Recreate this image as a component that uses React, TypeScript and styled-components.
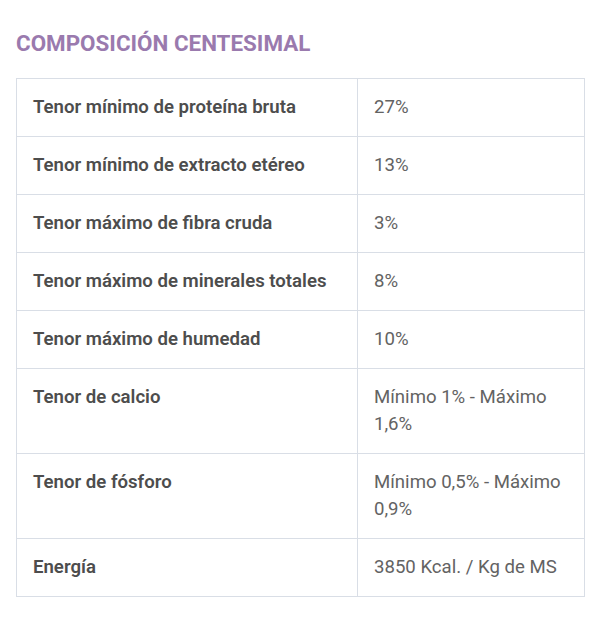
import React from "react";
import styled, { createGlobalStyle } from "styled-components";

const Global = createGlobalStyle`
  html, body { margin: 0; padding: 0; background: #fff; }
  body { font-family: Roboto, "Noto Sans", sans-serif; }
`;

const Page = styled.div`
  padding: 28px 16px 0 16px;
  width: 568px;
`;

const Title = styled.h2`
  margin: 0 0 20px 0;
  font-size: 22.4px;
  line-height: 30px;
  font-weight: 700;
  color: #9a7aae;
`;

const Table = styled.table`
  width: 568px;
  table-layout: fixed;
  border-collapse: collapse;
  border: 1px solid #d9dee6;
`;

const Col = styled.col<{ $w: number }>`
  width: ${(p) => p.$w}px;
`;

const Cell = styled.td<{ $head?: boolean }>`
  border: 1px solid #d9dee6;
  padding: 15px 16px;
  font-size: 18.6px;
  line-height: 27px;
  vertical-align: top;
  color: ${(p) => (p.$head ? "#4d4d4d" : "#636363")};
  font-weight: ${(p) => (p.$head ? 600 : 400)};
`;

const rows: [string, string][] = [
  ["Tenor mínimo de proteína bruta", "27%"],
  ["Tenor mínimo de extracto etéreo", "13%"],
  ["Tenor máximo de fibra cruda", "3%"],
  ["Tenor máximo de minerales totales", "8%"],
  ["Tenor máximo de humedad", "10%"],
  ["Tenor de calcio", "Mínimo 1% - Máximo 1,6%"],
  ["Tenor de fósforo", "Mínimo 0,5% - Máximo 0,9%"],
  ["Energía", "3850 Kcal. / Kg de MS"],
];

export default function App() {
  return (
    <>
      <Global />
      <Page>
        <Title>COMPOSICIÓN CENTESIMAL</Title>
        <Table>
          <colgroup>
            <Col $w={341} />
            <Col $w={227} />
          </colgroup>
          <tbody>
            {rows.map(([k, v]) => (
              <tr key={k}>
                <Cell $head>{k}</Cell>
                <Cell>{v}</Cell>
              </tr>
            ))}
          </tbody>
        </Table>
      </Page>
    </>
  );
}
